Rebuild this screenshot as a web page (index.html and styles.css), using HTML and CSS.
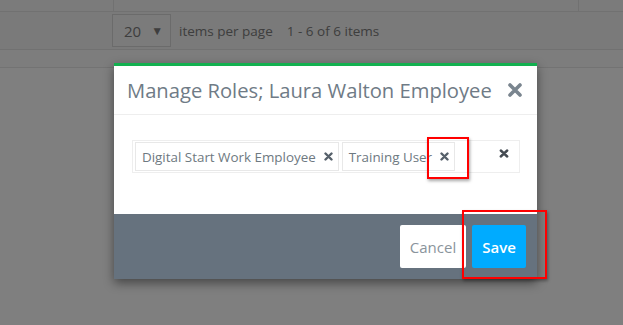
FILE: index.html
```html
<!DOCTYPE html>
<html lang="en">
<head>
  <meta charset="UTF-8" />
  <title>Manage Roles</title>
  <link rel="stylesheet" href="styles.css">
</head>
<body>
  <div class="page">
    <div class="grid-head">
      <div class="cell cell-a"></div>
      <div class="cell cell-b"></div>
      <div class="cell"></div>
    </div>
    <div class="pager">
      <div class="page-size">
        <span>20</span>
        <span class="caret">&#9660;</span>
      </div>
      <span class="pager-label">items per page</span>
      <span class="pager-info">1 - 6 of 6 items</span>
    </div>
    <div class="grid-foot"></div>
  </div>

  <div class="backdrop"></div>

  <div class="modal">
    <div class="modal-header">
      <div class="modal-title">Manage Roles; Laura Walton Employee</div>
      <svg class="close" width="16" height="16" viewBox="0 0 16 16">
        <path d="M3 3 L13 13 M13 3 L3 13" stroke="#7a858f" stroke-width="3.6" stroke-linecap="round"/>
      </svg>
    </div>
    <div class="modal-body">
      <div class="multiselect">
        <div class="tag">
          <span>Digital Start Work Employee</span>
          <svg class="tag-x" width="9" height="9" viewBox="0 0 9 9">
            <path d="M1.5 1.5 L7.5 7.5 M7.5 1.5 L1.5 7.5" stroke="#56606a" stroke-width="2.4" stroke-linecap="round"/>
          </svg>
        </div>
        <div class="tag">
          <span>Training User</span>
          <svg class="tag-x" width="9" height="9" viewBox="0 0 9 9">
            <path d="M1.5 1.5 L7.5 7.5 M7.5 1.5 L1.5 7.5" stroke="#56606a" stroke-width="2.4" stroke-linecap="round"/>
          </svg>
        </div>
        <svg class="clear-x" width="10" height="9" viewBox="0 0 10 9">
          <path d="M1.8 1.5 L8.2 7.5 M8.2 1.5 L1.8 7.5" stroke="#444b52" stroke-width="2.4" stroke-linecap="round"/>
        </svg>
      </div>
    </div>
    <div class="modal-footer">
      <button class="btn btn-cancel">Cancel</button>
      <button class="btn btn-save">Save</button>
    </div>
  </div>

  <!-- screenshot annotations -->
  <div class="mark mark-tag"></div>
  <div class="mark mark-save"></div>
</body>
</html>
```

FILE: styles.css
```css
body {
  margin: 0;
  background: #fff;
  font-family: 'Open Sans', sans-serif;
  width: 623px;
  height: 325px;
  overflow: hidden;
  position: relative;
}

.grid-head {
  display: flex;
  height: 11px;
  background: #f6f6f6;
  border-bottom: 1px solid #e2e2e2;
}

.cell {
  flex: 1;
}

.cell-a {
  flex: 0 0 113px;
  border-right: 1px solid #e2e2e2;
}

.cell-b {
  flex: 0 0 464px;
  border-right: 1px solid #e2e2e2;
}

.pager {
  display: flex;
  align-items: center;
  height: 37px;
  padding-left: 112px;
  background: #f4f4f4;
  border-bottom: 1px solid #e2e2e2;
  color: #7c7c7c;
  font-size: 13.5px;
}

.page-size {
  display: flex;
  align-items: center;
  box-sizing: border-box;
  width: 59px;
  height: 33px;
  padding-left: 11px;
  border: 1px solid #d6d6d6;
  background: #f7f7f7;
  font-size: 15px;
  margin-right: 8px;
}

.caret {
  font-size: 12px;
  margin-left: 10px;
}

.pager-label {
  margin-right: 14px;
}

.grid-foot {
  height: 17px;
  background: #fbfbfb;
  border-bottom: 1px solid #e6e6e6;
}

.backdrop {
  position: absolute;
  inset: 0;
  background: rgba(0, 0, 0, 0.5);
}

.modal {
  position: absolute;
  left: 114px;
  top: 63px;
  width: 423px;
  background: #fff;
  border-top: 3px solid #12b04f;
  box-shadow: 0 4px 10px rgba(0, 0, 0, 0.45);
}

.modal-header {
  display: flex;
  align-items: center;
  justify-content: space-between;
  height: 48px;
  padding: 0 14px 0 13px;
  border-bottom: 1px solid #eeeeee;
}

.modal-title {
  font-size: 20.2px;
  color: #6f7b86;
}

.modal-body {
  padding: 25px 17px 41px 18px;
}

.multiselect {
  display: flex;
  align-items: center;
  height: 33px;
  box-sizing: border-box;
  padding: 2px;
  border: 1px solid #eeeeee;
}

.tag {
  display: flex;
  align-items: center;
  height: 29px;
  box-sizing: border-box;
  padding: 0 5px 0 6px;
  margin-right: 3px;
  border: 1px solid #e8e8e8;
  color: #6e7981;
  font-size: 13.4px;
}

.tag-x {
  margin-left: 8px;
}

.clear-x {
  margin-left: auto;
  margin-right: 8px;
  margin-top: -6px;
}

.modal-footer {
  display: flex;
  justify-content: flex-end;
  gap: 6px;
  padding: 11px 11px 11px 0;
  background: #66727e;
}

.btn {
  height: 43px;
  border: none;
  border-radius: 2px;
  font-family: 'Open Sans', sans-serif;
  font-size: 15px;
  padding: 0;
}

.btn-cancel {
  width: 66px;
  background: #fff;
  color: #8a949c;
}

.btn-save {
  width: 54px;
  background: #00abff;
  color: #fff;
  font-weight: 600;
}

.mark {
  position: absolute;
  border: 2px solid #ff0000;
  box-shadow: 1px 2px 3px rgba(0, 0, 0, 0.35);
}

.mark-tag {
  left: 427px;
  top: 137px;
  width: 38px;
  height: 38px;
}

.mark-save {
  left: 462px;
  top: 210px;
  width: 81px;
  height: 65px;
}
```
